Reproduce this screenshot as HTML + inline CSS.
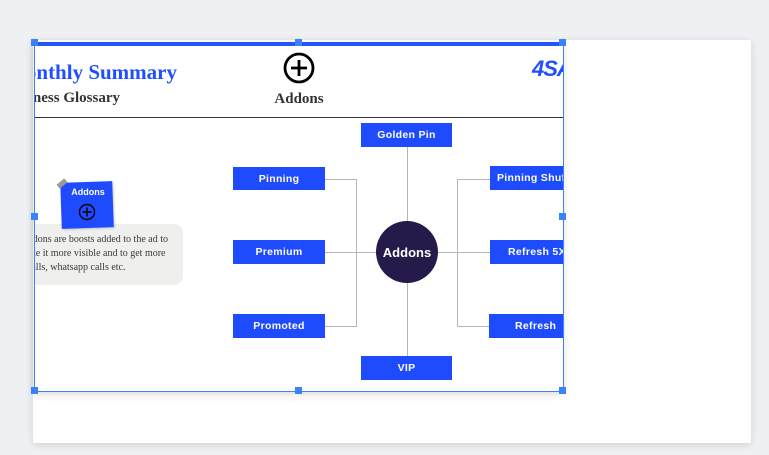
<!DOCTYPE html>
<html><head><meta charset="utf-8"><style>
*{margin:0;padding:0;box-sizing:border-box}
body{width:769px;height:455px;background:#eef0f3;position:relative;overflow:hidden;font-family:"Liberation Sans",sans-serif}
.page{position:absolute;left:33px;top:40px;width:718px;height:403px;background:#fff;box-shadow:0 2px 8px rgba(0,0,0,.12)}
.slide{position:absolute;left:34px;top:42px;width:529px;height:349px;background:#fff;overflow:hidden;box-shadow:0 3px 8px rgba(0,0,0,.15)}
.ab{position:absolute}
.box{position:absolute;background:#1f4bff;color:#fff;font-size:10.5px;font-weight:bold;display:flex;align-items:center;justify-content:center;letter-spacing:.3px;white-space:nowrap}
.ln{position:absolute;background:#b5b5b5}
.h{position:absolute;width:7px;height:7px;background:#3b82f6}
.serif{font-family:"Liberation Serif",serif;font-weight:bold}
</style></head><body>
<div class="page"></div>
<div class="slide">
 <div class="ab" style="left:0;top:0;width:529px;height:4px;background:#2456f5"></div>
 <div class="ab serif" style="left:-157px;top:18px;width:300px;text-align:right;font-size:21px;color:#1f4fff;white-space:nowrap">Monthly Summary</div>
 <div class="ab serif" style="left:-214px;top:48px;width:300px;text-align:right;font-size:15px;color:#333;white-space:nowrap">Business Glossary</div>
 <svg class="ab" style="left:249px;top:10px" width="32" height="32" viewBox="0 0 32 32"><circle cx="16" cy="16" r="14" fill="none" stroke="#000" stroke-width="2.8"/><path d="M16 8v16M8 16h16" stroke="#000" stroke-width="2.8"/></svg>
 <div class="ab serif" style="left:225px;top:49px;width:80px;text-align:center;font-size:15px;color:#333">Addons</div>
 <div class="ab" style="left:498px;top:14px;font-size:22px;font-weight:bold;font-style:italic;color:#1f4fff;letter-spacing:-1px">4SA</div>
 <div class="ab" style="left:0;top:75px;width:529px;height:1px;background:#333"></div>
 <div class="ln" style="left:291px;top:137px;width:31px;height:1px"></div>
 <div class="ln" style="left:291px;top:284px;width:31px;height:1px"></div>
 <div class="ln" style="left:322px;top:137px;width:1px;height:148px"></div>
 <div class="ln" style="left:291px;top:210px;width:165px;height:1px"></div>
 <div class="ln" style="left:423px;top:137px;width:1px;height:148px"></div>
 <div class="ln" style="left:423px;top:137px;width:33px;height:1px"></div>
 <div class="ln" style="left:423px;top:284px;width:33px;height:1px"></div>
 <div class="ln" style="left:373px;top:105px;width:1px;height:210px"></div>
 <div class="box" style="left:327px;top:81px;width:91px;height:24px">Golden Pin</div>
 <div class="box" style="left:199px;top:125px;width:92px;height:23px">Pinning</div>
 <div class="box" style="left:199px;top:198px;width:92px;height:24px">Premium</div>
 <div class="box" style="left:199px;top:272px;width:92px;height:24px">Promoted</div>
 <div class="box" style="left:327px;top:314px;width:91px;height:24px">VIP</div>
 <div class="box" style="left:456px;top:124px;width:90px;height:24px;justify-content:flex-start;padding-left:7px">Pinning Shuffle</div>
 <div class="box" style="left:456px;top:198px;width:90px;height:24px;justify-content:flex-start;padding-left:18px">Refresh 5X</div>
 <div class="box" style="left:455px;top:272px;width:90px;height:24px;justify-content:flex-start;padding-left:26px">Refresh</div>
 <div class="ab" style="left:342px;top:179px;width:62px;height:62px;border-radius:50%;background:#251a4a;color:#fff;font-size:13px;font-weight:bold;display:flex;align-items:center;justify-content:center">Addons</div>
 <div class="ab" style="left:-30px;top:182px;width:179px;height:61px;border-radius:9px;background:#efefee"></div>
 <div class="ab" style="left:-190px;top:191px;width:339px;text-align:right;padding-right:15px;font-family:'Liberation Serif',serif;font-size:10px;line-height:14px;color:#3a3a3a;white-space:nowrap">Addons are boosts added to the ad to<br>make it more visible and to get more&nbsp;<br>more calls, whatsapp calls etc.&nbsp;&nbsp;&nbsp;&nbsp;&nbsp;&nbsp;&nbsp;&nbsp;&nbsp;&nbsp;&nbsp;&nbsp;&nbsp;&nbsp;&nbsp;&nbsp;&nbsp;</div>
 <div class="ab" style="left:27px;top:140px;width:52px;height:46px;background:#1f4bff;transform:rotate(-2deg);box-shadow:1px 1px 2px rgba(0,0,0,.2)"></div>
 <div class="ab" style="left:23px;top:139px;width:10px;height:5px;background:#999;transform:rotate(-40deg)"></div>
 <div class="ab" style="left:28px;top:145px;width:52px;text-align:center;color:#fff;font-size:9px;font-weight:bold">Addons</div>
 <svg class="ab" style="left:44px;top:161px" width="18" height="18" viewBox="0 0 18 18"><circle cx="9" cy="9" r="7.5" fill="none" stroke="#000" stroke-width="1.4"/><path d="M9 4.5v9M4.5 9h9" stroke="#000" stroke-width="1.4"/></svg>
</div>
<div class="ab" style="left:34px;top:42px;width:1px;height:350px;background:#3b82f6"></div>
<div class="ab" style="left:563px;top:42px;width:1px;height:350px;background:#3b82f6"></div>
<div class="ab" style="left:34px;top:391px;width:530px;height:1px;background:#3b82f6"></div>
<div class="h" style="left:31px;top:39px"></div>
<div class="h" style="left:295px;top:39px"></div>
<div class="h" style="left:559px;top:39px"></div>
<div class="h" style="left:31px;top:213px"></div>
<div class="h" style="left:559px;top:213px"></div>
<div class="h" style="left:31px;top:387px"></div>
<div class="h" style="left:295px;top:387px"></div>
<div class="h" style="left:559px;top:387px"></div>
</body></html>
